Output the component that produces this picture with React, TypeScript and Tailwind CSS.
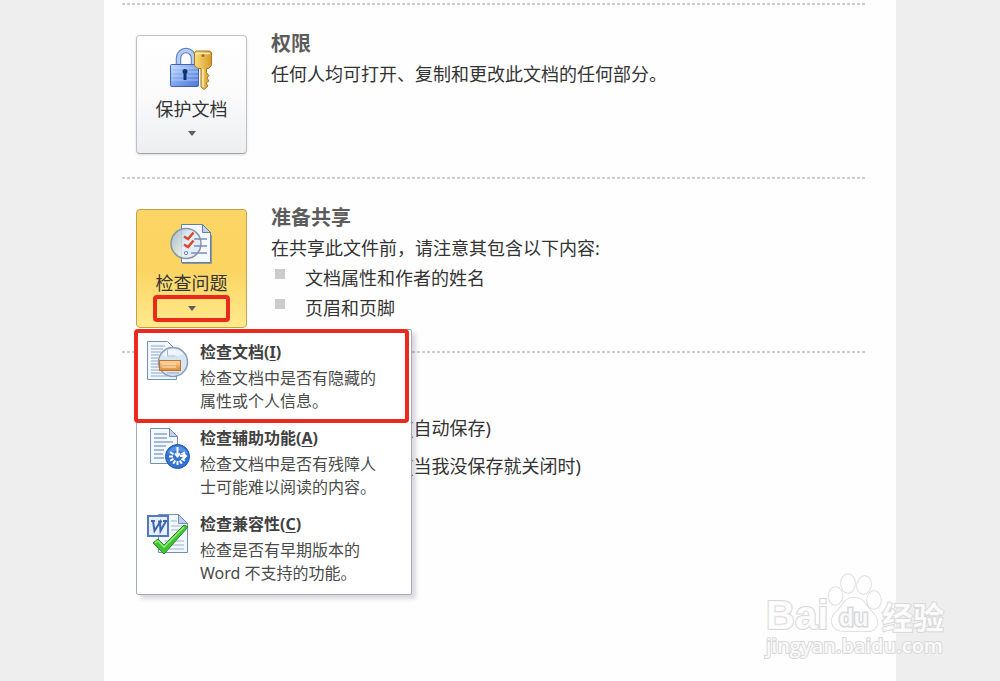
import type { ReactNode } from 'react';

function LockKeyIcon() {
  return (
    <svg viewBox="0 0 44 44" className="h-11 w-11" aria-hidden="true">
      <defs>
        <linearGradient id="lock" x1="0" y1="0" x2="1" y2="1">
          <stop offset="0" stopColor="#c4d9fb" />
          <stop offset="0.5" stopColor="#7ea6ee" />
          <stop offset="1" stopColor="#4d76d4" />
        </linearGradient>
        <linearGradient id="key" x1="0" y1="0" x2="1" y2="0">
          <stop offset="0" stopColor="#f9df7c" />
          <stop offset="1" stopColor="#d69a28" />
        </linearGradient>
      </defs>
      <path d="M8.500 19V11a7.500 7.500 0 0 1 15 0v8" fill="none" stroke="#5878b8" strokeWidth="5.500" />
      <path d="M8.500 19V11a7.500 7.500 0 0 1 15 0v8" fill="none" stroke="#b4cbf4" strokeWidth="3.500" />
      <rect x="0.500" y="17.500" width="28" height="22" rx="1" fill="url(#lock)" stroke="#4163b4" />
      <path d="M1 21h27M1 25h27M1 29h27M1 33h27" stroke="#d5e3fd" strokeOpacity="0.6" />
      <path d="M15 22a2.500 2.500 0 0 1 2.500 2.500c0 1-.5 1.500-1 2V33h-3v-6.500c-.5-.5-1-1-1-2A2.500 2.500 0 0 1 15 22z" fill="#14316f" />
      <path
        d="M24.500 5.500l2-1.500h13l2 1.500v13l-3 3h-2v4l2.500 3-2 2.500 2 3-3 2 2 3-4 3.500-3-2.500V21.500h-3l-3.500-3z"
        fill="url(#key)"
        stroke="#a9741f"
      />
      <path d="M26 6.500h14M33 22v18" stroke="#fdf0b4" strokeWidth="1.500" fill="none" />
      <circle cx="33" cy="8.500" r="1.500" fill="#96702a" />
    </svg>
  );
}

function InspectIcon() {
  return (
    <svg viewBox="0 0 44 44" className="h-11 w-11" aria-hidden="true">
      <defs>
        <linearGradient id="lens" x1="0" y1="0" x2="1" y2="0.6">
          <stop offset="0" stopColor="#8fb4d8" />
          <stop offset="0.6" stopColor="#e4edf7" />
          <stop offset="1" stopColor="#dde8f4" />
        </linearGradient>
      </defs>
      <path d="M11.500 3.500h21l8 8v30h-29z" fill="#f5f9fe" stroke="#5f7fa8" />
      <path d="M32.500 3.500v8h8z" fill="#bfd2ea" stroke="#5f7fa8" />
      <path d="M12 42.500h29.500V14" fill="none" stroke="#6b7f94" strokeOpacity="0.7" />
      <circle cx="16" cy="22.500" r="15" fill="url(#lens)" fillOpacity="0.85" stroke="#8496a8" strokeWidth="1.500" />
      <path d="M24 18h13M24 25h13M21 32h16" stroke="#7b8fb2" strokeWidth="1.500" />
      <path d="M14 15.500l4 2.500 5.500-6.500M14 23.500l4 2.500 5.500-6.500" fill="none" stroke="#d8492c" strokeWidth="2.500" />
      <circle cx="16" cy="32" r="1.700" fill="#e9f1fa" stroke="#6e88ac" />
    </svg>
  );
}

function DocumentLensIcon() {
  return (
    <svg viewBox="0 0 44 44" className="h-11 w-11" aria-hidden="true">
      <defs>
        <linearGradient id="tag" x1="0" y1="0" x2="0" y2="1">
          <stop offset="0" stopColor="#fbd7a0" />
          <stop offset="1" stopColor="#e08a34" />
        </linearGradient>
      </defs>
      <path d="M1.500 2.500h20l9 9v29h-29z" fill="#f3f8fe" stroke="#7590b8" />
      <path d="M5 7h14M5 10h12M5 13h10M5 16h8M5 19h7M5 22h7M5 25h7M5 28h8M5 31h9M5 34h12M5 37h17" stroke="#8ba5ca" />
      <circle cx="27" cy="23" r="14.500" fill="#d3e4f3" fillOpacity="0.93" stroke="#8b9db2" strokeWidth="1.500" />
      <path d="M16 16a13 13 0 0 1 21-1c-7 3-14 4-21 1z" fill="#ffffff" fillOpacity="0.6" />
      <path d="M21.500 11v6h8" fill="none" stroke="#a4bbd4" />
      <rect x="13.500" y="21.500" width="21" height="10" fill="url(#tag)" stroke="#bd732b" />
      <path d="M16 25h14M16 28h14" stroke="#fde7c4" />
      <path d="M21 34h12" stroke="#8ba5ca" />
    </svg>
  );
}

function DocumentAccessIcon() {
  const ticks = [60, 90, 120, 150, 180, 210, 240, 270, 300];
  return (
    <svg viewBox="0 0 44 44" className="h-11 w-11" aria-hidden="true">
      <path d="M4.500 3.500h19l8 8v27h-27z" fill="#f3f8fe" stroke="#7590b8" />
      <path d="M23.500 3.500v8h8z" fill="#bdd0ea" stroke="#7590b8" />
      <path d="M8 9h13M8 13h13M8 17h19M8 21h12M8 25h10M8 29h9M8 33h10" stroke="#8ba5ca" strokeWidth="1.500" />
      <circle cx="31.500" cy="31.500" r="12" fill="#3273d2" stroke="#2055aa" />
      <path d="M21 29a11 11 0 0 1 21 0c-7-4-14-4-21 0z" fill="#72a7ee" fillOpacity="0.6" />
      {ticks.map((angle) => (
        <path key={angle} d="M31.500 23v4" stroke="#fff" strokeWidth="2" transform={`rotate(${angle} 31.500 31.500)`} />
      ))}
      <path d="M31.500 22v9M29 28.500l2.500 3 2.500-3M34 31h6M37 28l3 3-3 3" stroke="#fff" strokeWidth="2" fill="none" />
    </svg>
  );
}

function WordCheckIcon() {
  return (
    <svg viewBox="0 0 44 44" className="h-11 w-11" aria-hidden="true">
      <path d="M12.500 3.500h20l9 9v29h-29z" fill="#f3f8fe" stroke="#7590b8" />
      <path d="M32.500 3.500v9h9z" fill="#bdd0ea" stroke="#7590b8" />
      <path d="M25 10h6M25 15h11M25 19h12M18 30h20M18 34h20M18 38h20" stroke="#9db3d4" />
      <rect x="2" y="5" width="20" height="20" fill="#e7effb" stroke="#5079bf" strokeWidth="2" />
      <path d="M7 10l1.500 10L14 11l.5 9L20 10M5 10h4M12 10.500h4M17 10h4" fill="none" stroke="#3a63b0" strokeWidth="2" />
      <path d="M7 32l5-4 6 6L38 14l4 2-24 27z" fill="#42c333" stroke="#228d20" strokeLinejoin="round" />
      <path d="M9 32l3-2 6 6L38 16" fill="none" stroke="#94ea7d" strokeWidth="1.500" />
    </svg>
  );
}

function Caret() {
  return (
    <svg viewBox="0 0 8 5" className="h-[5px] w-2" aria-hidden="true">
      <path d="M0 0h8L4 5z" fill="#5f5f5f" />
    </svg>
  );
}

function BigButton({ icon, label, active = false }: { icon: ReactNode; label: string; active?: boolean }) {
  const tone = active
    ? 'border-[#c4a04c] bg-linear-to-b from-[#fcd565] via-[#fbd461] to-[#ffea8c]'
    : 'border-[#bfc1c5] border-b-[#a2a4a8] bg-linear-to-b from-white via-[#fbfbfc] to-[#eceef0] shadow-sm';
  return (
    <button
      type="button"
      aria-haspopup="menu"
      aria-expanded={active}
      className={`flex h-[119px] w-[111px] flex-col items-center rounded border pt-[11px] ${tone}`}
    >
      {icon}
      <span className="mt-1 text-lg leading-[28px] text-[#333]">{label}</span>
      {active ? (
        <span className="-mt-0.5 flex h-[27px] w-[77px] items-center justify-center rounded border-4 border-[#ea2a1c]">
          <Caret />
        </span>
      ) : (
        <span className="mt-2">
          <Caret />
        </span>
      )}
    </button>
  );
}

type Item = { icon: ReactNode; title: string; hotkey: string; lines: string[]; marked?: boolean };

const items: Item[] = [
  {
    icon: <DocumentLensIcon />,
    title: '检查文档',
    hotkey: 'I',
    lines: ['检查文档中是否有隐藏的', '属性或个人信息。'],
    marked: true,
  },
  {
    icon: <DocumentAccessIcon />,
    title: '检查辅助功能',
    hotkey: 'A',
    lines: ['检查文档中是否有残障人', '士可能难以阅读的内容。'],
  },
  {
    icon: <WordCheckIcon />,
    title: '检查兼容性',
    hotkey: 'C',
    lines: ['检查是否有早期版本的', 'Word 不支持的功能。'],
  },
];

function CheckMenu() {
  return (
    <div
      role="menu"
      className="absolute top-full left-0 z-10 mt-px w-[276px] rounded-xs border border-[#a5aab4] bg-white py-[3px] shadow-[4px_4px_4px_rgba(90,80,120,0.22)]"
    >
      {items.map((item) => (
        <button key={item.title} type="button" role="menuitem" className="relative flex w-full gap-2 py-1.5 pl-[9px] text-left">
          {item.icon}
          <span className="pl-0.5 text-base leading-[23px] text-[#4a4a4a]">
            <span className="mb-0.5 block leading-[26px] font-bold text-[#414141]">
              {item.title}(<u className="underline-offset-2">{item.hotkey}</u>)
            </span>
            {item.lines.map((line) => (
              <span key={line} className="block whitespace-nowrap">
                {line}
              </span>
            ))}
          </span>
          {item.marked && (
            <span className="absolute -top-1 right-0.5 -bottom-1 -left-[3px] rounded-sm border-4 border-[#ea2a1c]" />
          )}
        </button>
      ))}
    </div>
  );
}

function Divider() {
  return (
    <svg className="block h-0.5 w-full" aria-hidden="true">
      <line x1="0" y1="1" x2="100%" y2="1" stroke="#cfcfcf" strokeWidth="2" strokeDasharray="3 2" />
    </svg>
  );
}

function Watermark() {
  return (
    <svg viewBox="0 0 190 96" className="absolute right-[46px] bottom-[16px] h-24 w-[190px]" role="img" aria-label="Baidu 经验">
      <g
        fill="#fff"
        fillOpacity="0.85"
        stroke="#d9d9d9"
        strokeWidth="2"
        paintOrder="stroke"
        fontFamily="'Liberation Sans', 'Noto Sans CJK SC', sans-serif"
        fontWeight="700"
      >
        <text x="2" y="60" fontSize="40">Bai</text>
        <g strokeWidth="1.500">
          <ellipse cx="71.500" cy="27" rx="7" ry="9" />
          <ellipse cx="84" cy="14.500" rx="7" ry="9.500" />
          <ellipse cx="100" cy="16" rx="7" ry="9" transform="rotate(12 100 16)" />
          <ellipse cx="110" cy="31" rx="7" ry="9" />
          <path d="M90 28.500c-9 0-11 7-15 11.500-4 4-8.500 8-7 14 2 9 11 8.500 22 8s20 3 23-6c2-7-3-11-7-15.500C101 35 99 28.500 90 28.500z" />
        </g>
        <text x="75" y="57" fontSize="24" strokeWidth="3">du</text>
        <text x="118" y="60" fontSize="31" fontFamily="'Noto Sans CJK SC', sans-serif">经验</text>
        <text x="2" y="84" fontSize="20" fontFamily="'Open Sans', sans-serif" fontWeight="600">jingyan.baidu.com</text>
      </g>
    </svg>
  );
}

export default function App() {
  return (
    <div
      lang="zh-CN"
      className="relative min-h-screen bg-[#eeeeee] font-['Noto_Sans','Noto_Sans_CJK_SC',sans-serif] text-lg text-[#333]"
    >
      <main className="mx-auto min-h-screen max-w-[792px] bg-[#fefefe] pt-[3px] pr-[29px] pl-[18px]">
        <Divider />
        <section className="flex h-[172px] gap-6 pt-[30px] pl-3.5">
          <BigButton icon={<LockKeyIcon />} label="保护文档" />
          <div className="-mt-1.5">
            <h2 className="text-xl leading-[30px] font-bold text-[#5c5c5c]">权限</h2>
            <p className="leading-[30px]">任何人均可打开、复制和更改此文档的任何部分。</p>
          </div>
        </section>
        <Divider />
        <section className="flex h-[172px] gap-6 pt-[30px] pl-3.5">
          <div className="relative h-[119px]">
            <BigButton icon={<InspectIcon />} label="检查问题" active />
            <CheckMenu />
          </div>
          <div className="-mt-1.5">
            <h2 className="text-xl leading-[30px] font-bold text-[#5c5c5c]">准备共享</h2>
            <p className="leading-[30px]">在共享此文件前，请注意其包含以下内容:</p>
            <ul className="pl-1 leading-[30px]">
              {['文档属性和作者的姓名', '页眉和页脚'].map((text) => (
                <li key={text} className="flex gap-5">
                  <span className="mt-1.5 h-2.5 w-2.5 bg-[#cbcbcb]" />
                  {text}
                </li>
              ))}
            </ul>
          </div>
        </section>
        <Divider />
        <section className="pt-[56px] pl-[286px] leading-[38px]">
          <p>(自动保存)</p>
          <p>(当我没保存就关闭时)</p>
        </section>
      </main>
      <Watermark />
    </div>
  );
}
